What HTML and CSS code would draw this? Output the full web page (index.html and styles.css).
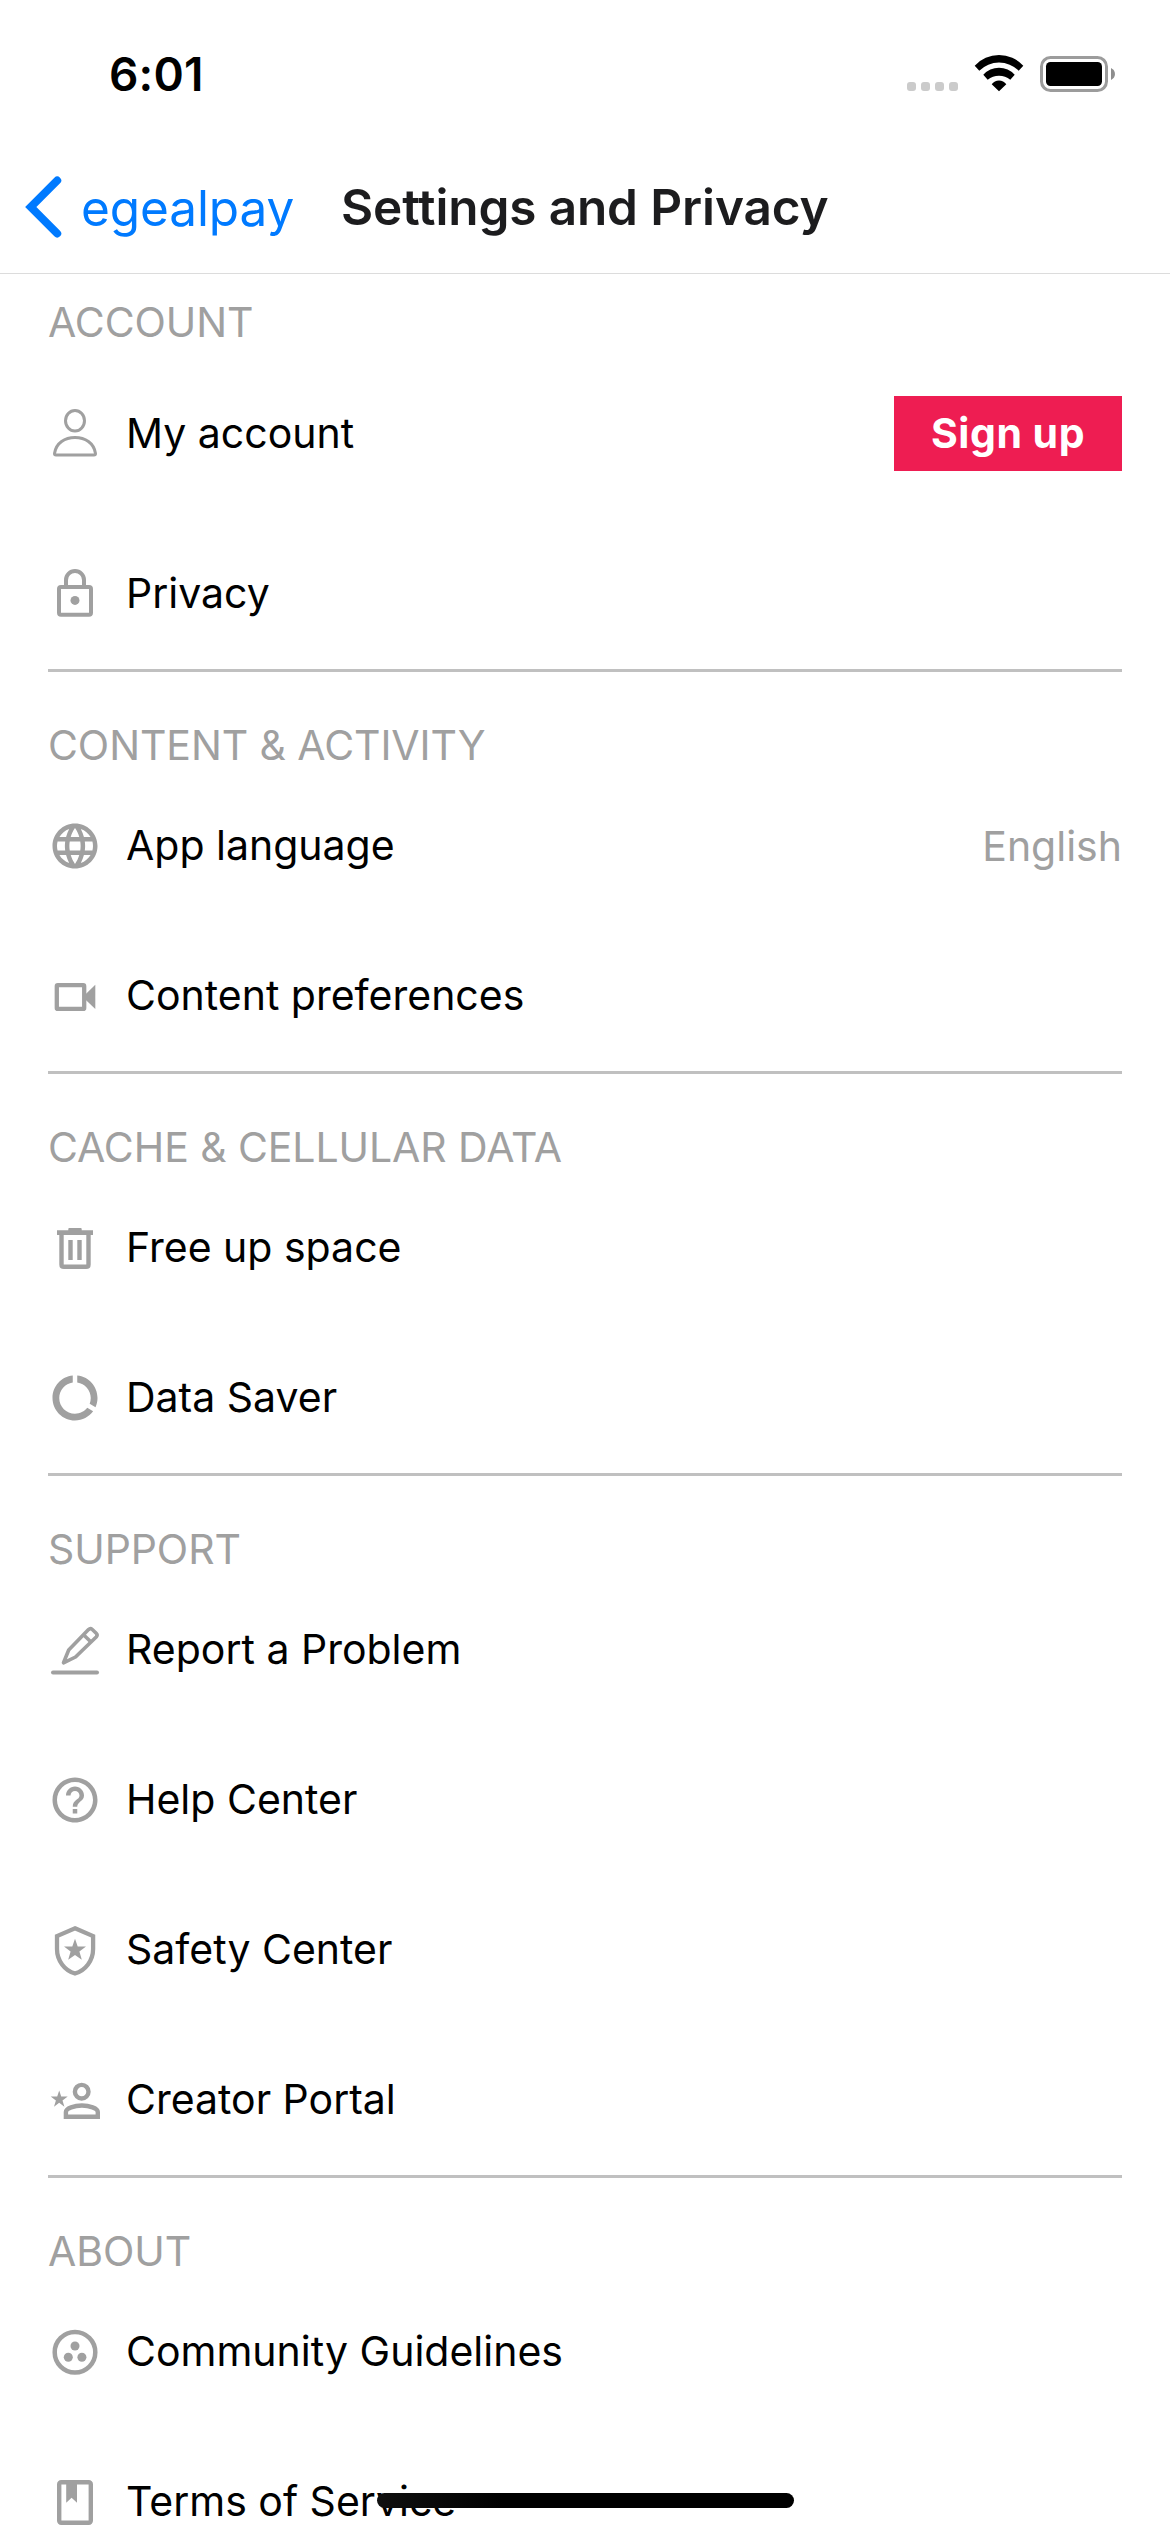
FILE: index.html
```html
<!DOCTYPE html>
<html lang="en">
<head>
<meta charset="utf-8">
<title>Settings and Privacy</title>
<link rel="stylesheet" href="styles.css">
</head>
<body>
<div class="screen">
  <header class="header">
    <div class="status-bar">
      <span class="time">6:01</span>
      <div class="status-icons">
        <div class="signal"><i></i><i></i><i></i><i></i></div>
        <svg class="wifi" width="50" height="37" viewBox="0 0 50 37"><path d="M.7 10.7A33 33 0 0 1 49.3 10.7L44.7 15.7A28 28 0 0 0 5.3 15.7ZM9.3 19.7A21 21 0 0 1 40.7 19.7L36.3 24.7A18 18 0 0 0 13.7 24.7ZM17.7 29.3A9 9 0 0 1 32.3 29.3L25 36.2Z"/></svg>
        <svg class="battery" width="75" height="36" viewBox="0 0 75 36"><rect x="1.5" y="1.5" width="65" height="33" rx="9" fill="none" stroke="#9c9c9c" stroke-width="3"/><rect x="6" y="6" width="56" height="24" rx="4.5"/><path d="M71 12c5.3 2.6 5.3 9.400 0 12z" fill="#8e8e8e"/></svg>
      </div>
    </div>
    <nav class="nav-bar">
      <a class="back">
        <svg width="40" height="64" viewBox="0 0 40 64"><path d="M34.200 5.500L7.800 32L34.200 58.500" fill="none" stroke="#007aff" stroke-width="8" stroke-linecap="round"/></svg>
        <span>egealpay</span>
      </a>
      <h1 class="title">Settings and Privacy</h1>
    </nav>
  </header>

  <main class="settings">
    <section class="group group-account">
      <h2 class="heading">ACCOUNT</h2>
      <div class="row row-account">
        <svg class="icon line" viewBox="0 0 54 54" stroke-width="3"><ellipse cx="27" cy="13.800" rx="9.500" ry="10.300"/><path d="M6.500 46.500C8 36 17 30.500 27 30.500S46 36 47.500 46.500Q47.700 48 46 48H8Q6.300 48 6.500 46.500Z"/></svg>
        <span class="label">My account</span>
        <button class="sign-up">Sign up</button>
      </div>
      <div class="row">
        <svg class="icon line" viewBox="0 0 54 54" stroke-width="4"><rect x="11" y="20" width="32" height="27.700" rx="2"/><path d="M18 20V13a9 9 0 0 1 18 0V20"/><circle class="solid" cx="27" cy="33.400" r="4.500"/></svg>
        <span class="label">Privacy</span>
      </div>
    </section>

    <section class="group">
      <h2 class="heading">CONTENT &amp; ACTIVITY</h2>
      <div class="row">
        <svg class="icon" viewBox="0 0 24 24"><path d="M11.990 2C6.470 2 2 6.480 2 12s4.470 10 9.990 10C17.520 22 22 17.520 22 12S17.520 2 11.990 2zm6.930 6h-2.950c-.32-1.250-.78-2.450-1.380-3.560 1.840.63 3.370 1.910 4.330 3.560zM12 4.040c.83 1.200 1.480 2.530 1.910 3.960h-3.820c.43-1.430 1.080-2.760 1.910-3.960zM4.260 14C4.100 13.360 4 12.690 4 12s.1-1.360.26-2h3.380c-.08.66-.14 1.320-.14 2 0 .68.06 1.340.14 2H4.260zm.82 2h2.950c.32 1.250.78 2.450 1.380 3.560-1.840-.63-3.370-1.900-4.330-3.560zm2.950-8H5.080c.96-1.660 2.490-2.930 4.330-3.560C8.810 5.550 8.350 6.750 8.030 8zM12 19.960c-.83-1.200-1.480-2.530-1.910-3.960h3.820c-.43 1.430-1.080 2.760-1.910 3.960zM14.340 14H9.660c-.09-.66-.16-1.320-.16-2 0-.68.07-1.350.16-2h4.680c.09.65.16 1.320.16 2 0 .68-.07 1.340-.16 2zm.25 5.560c.6-1.110 1.060-2.310 1.380-3.560h2.950c-.96 1.650-2.490 2.930-4.330 3.560zM16.360 14c.08-.66.14-1.320.14-2 0-.68-.06-1.340-.14-2h3.380c.16.64.26 1.310.26 2s-.1 1.360-.26 2h-3.380z"/></svg>
        <span class="label">App language</span>
        <span class="value">English</span>
      </div>
      <div class="row">
        <svg class="icon line" viewBox="0 0 54 54" stroke-width="4.300"><rect x="8.800" y="16.200" width="27.400" height="23.700" rx="1"/><path class="solid" d="M36 26.800L47.300 15.700V40L36 29.200Z"/></svg>
        <span class="label">Content preferences</span>
      </div>
    </section>

    <section class="group">
      <h2 class="heading">CACHE &amp; CELLULAR DATA</h2>
      <div class="row">
        <svg class="icon line" viewBox="0 0 54 54" stroke-width="4.400"><path d="M13.500 13V43.400Q13.500 45.800 15.900 45.800H38.100Q40.500 45.800 40.500 43.400V13"/><path class="solid" d="M20.300 9.300V8Q20.300 7 21.300 7H32.700Q33.700 7 33.700 8V9.300H45V14H9V9.300ZM20.300 19h4.400v20h-4.400ZM29.300 19h4.400v20h-4.400Z"/></svg>
        <span class="label">Free up space</span>
      </div>
      <div class="row">
        <svg class="icon" viewBox="0 0 24 24"><path d="M13 2.050v3.030c3.390.49 6 3.390 6 6.920 0 .9-.18 1.750-.48 2.540l2.600 1.530c.56-1.240.88-2.620.88-4.070 0-5.180-3.950-9.450-9-9.950zM12 19c-3.870 0-7-3.130-7-7 0-3.530 2.610-6.430 6-6.920V2.050c-5.060.5-9 4.760-9 9.950 0 5.520 4.470 10 9.990 10 3.310 0 6.240-1.610 8.060-4.090l-2.600-1.530C16.170 17.980 14.210 19 12 19z"/></svg>
        <span class="label">Data Saver</span>
      </div>
    </section>

    <section class="group">
      <h2 class="heading">SUPPORT</h2>
      <div class="row">
        <svg class="icon line" viewBox="0 0 54 54" stroke-width="3.600" stroke-linejoin="round"><path d="M15.500 39.800L20.700 27L40.500 6.600Q42.400 4.800 44.300 6.500L48.200 10.300Q50 12 48.200 14L27.500 34Z"/><path d="M35.500 11.700L43 19"/><path d="M5 49.400H49" stroke-width="4" stroke-linecap="round"/></svg>
        <span class="label">Report a Problem</span>
      </div>
      <div class="row">
        <svg class="icon" viewBox="0 0 24 24"><path d="M11 18h2v-2h-2v2zm1-16C6.480 2 2 6.480 2 12s4.480 10 10 10 10-4.480 10-10S17.520 2 12 2zm0 18c-4.410 0-8-3.590-8-8s3.590-8 8-8 8 3.590 8 8-3.590 8-8 8zm0-14c-2.210 0-4 1.790-4 4h2c0-1.100.9-2 2-2s2 .9 2 2c0 2-3 1.750-3 5h2c0-2.250 3-2.500 3-5 0-2.210-1.790-4-4-4z"/></svg>
        <span class="label">Help Center</span>
      </div>
      <div class="row">
        <svg class="icon line" viewBox="0 0 54 54" stroke-width="4.300"><path d="M27 5.300L45.100 13.100V26C45.100 37.500 37.500 47.500 27 50.500C16.500 47.500 9 37.500 9 26V13.100Z"/><path class="solid" d="M27 15.700L29.700 23.500L38 23.600L31.400 28.600L33.800 36.700L27 31.900L20.200 36.700L22.600 28.600L16 23.600L24.300 23.500Z"/></svg>
        <span class="label">Safety Center</span>
      </div>
      <div class="row">
        <svg class="icon line" viewBox="0 0 54 54" stroke-width="4.400"><circle cx="33.700" cy="18.700" r="6.800"/><path d="M17.900 43.800V39C17.900 35.300 26.500 32.500 33.900 32.500S49.800 35.300 49.800 39V43.800Z"/><path class="solid" d="M11.200 17.400L13.200 23.500L19.700 23.600L14.500 27.400L16.400 33.700L11.200 29.800L6 33.700L7.900 27.400L2.700 23.600L9.200 23.500Z"/></svg>
        <span class="label">Creator Portal</span>
      </div>
    </section>

    <section class="group">
      <h2 class="heading">ABOUT</h2>
      <div class="row">
        <svg class="icon line" viewBox="0 0 54 54" stroke-width="4.500"><circle cx="27" cy="27.300" r="20.300"/><g class="solid"><circle cx="27" cy="21" r="4.500"/><circle cx="20.300" cy="32.200" r="4.500"/><circle cx="33.900" cy="32.200" r="4.500"/></g></svg>
        <span class="label">Community Guidelines</span>
      </div>
      <div class="row">
        <svg class="icon line" viewBox="0 0 54 54" stroke-width="4.400"><rect x="11.200" y="7.200" width="31.600" height="40.600" rx="2"/><path class="solid" d="M18.200 8V27.700L23.600 22.800L29 27.700V8Z"/></svg>
        <span class="label">Terms of Service</span>
      </div>
    </section>
  </main>
  <div class="home-indicator"></div>
</div>
</body>
</html>
```
FILE: styles.css
```css
* {
  box-sizing: border-box;
  margin: 0;
  padding: 0;
}

body {
  background: #fff;
  font-family: Inter, "Liberation Sans", sans-serif;
  color: #000;
}

.screen {
  position: relative;
  width: 1170px;
  height: 2532px;
  overflow: hidden;
}

svg {
  display: block;
  flex: none;
}

/* Header */
.header {
  height: 274px;
  border-bottom: 1px solid #dcdcdc;
}

.status-bar {
  display: flex;
  justify-content: space-between;
  height: 142px;
  padding: 44px 55px 0 109px;
}

.time {
  font-size: 46px;
  font-weight: 600;
  line-height: 60px;
  letter-spacing: 0.2px;
}

.status-icons {
  display: flex;
  align-items: flex-end;
  height: 48px;
}

.signal {
  display: flex;
  gap: 5px;
  margin: 0 16px 1px 0;
}

.signal i {
  width: 9px;
  height: 9px;
  border-radius: 3px;
  background: #cbcbcb;
}

.wifi {
  margin-right: 16px;
}

.nav-bar {
  display: flex;
  align-items: center;
  height: 130px;
  padding-left: 23px;
}

.back {
  display: flex;
  align-items: center;
  width: 318px;
  gap: 18px;
  color: #007aff;
  font-size: 49.5px;
  letter-spacing: -0.1px;
}

.back span {
  padding-top: 2px;
}

.title {
  color: #1c1c1e;
  font-size: 49.5px;
  font-weight: 600;
  letter-spacing: -0.12px;
}

/* Settings list */
.settings {
  padding: 0 48px;
}

.group + .group {
  border-top: 3px solid #c0c0c0;
}

.heading {
  display: flex;
  align-items: flex-end;
  height: 99px;
  padding-bottom: 1px;
  color: #a0a0a0;
  font-size: 41px;
  font-weight: 400;
  line-height: 50px;
  letter-spacing: -0.08px;
}

.group-account .heading {
  height: 75px;
  padding-bottom: 2px;
}

.row {
  display: flex;
  align-items: center;
  height: 150px;
}

.row-account {
  height: 170px;
}

.icon {
  width: 54px;
  height: 54px;
  margin-right: 24px;
  fill: #a0a0a0;
}

.icon.line {
  fill: none;
  stroke: #a0a0a0;
}

.icon .solid {
  fill: #a0a0a0;
  stroke: none;
}

.label,
.value {
  padding-bottom: 2px;
  font-size: 41px;
  line-height: 50px;
}

.value {
  margin-left: auto;
  padding-bottom: 0;
  color: #a0a0a0;
}

.sign-up {
  width: 228px;
  height: 75px;
  margin: 0 0 1px auto;
  border: 0;
  background: #ee1d52;
  color: #fff;
  font: 700 41px/73px Inter, "Liberation Sans", sans-serif;
  letter-spacing: 0.5px;
}

/* Home indicator floats over the list */
.home-indicator {
  position: absolute;
  left: 377px;
  bottom: 24px;
  width: 417px;
  height: 15px;
  border-radius: 8px;
  background: linear-gradient(90deg, #101010, #000 30%);
}
```
